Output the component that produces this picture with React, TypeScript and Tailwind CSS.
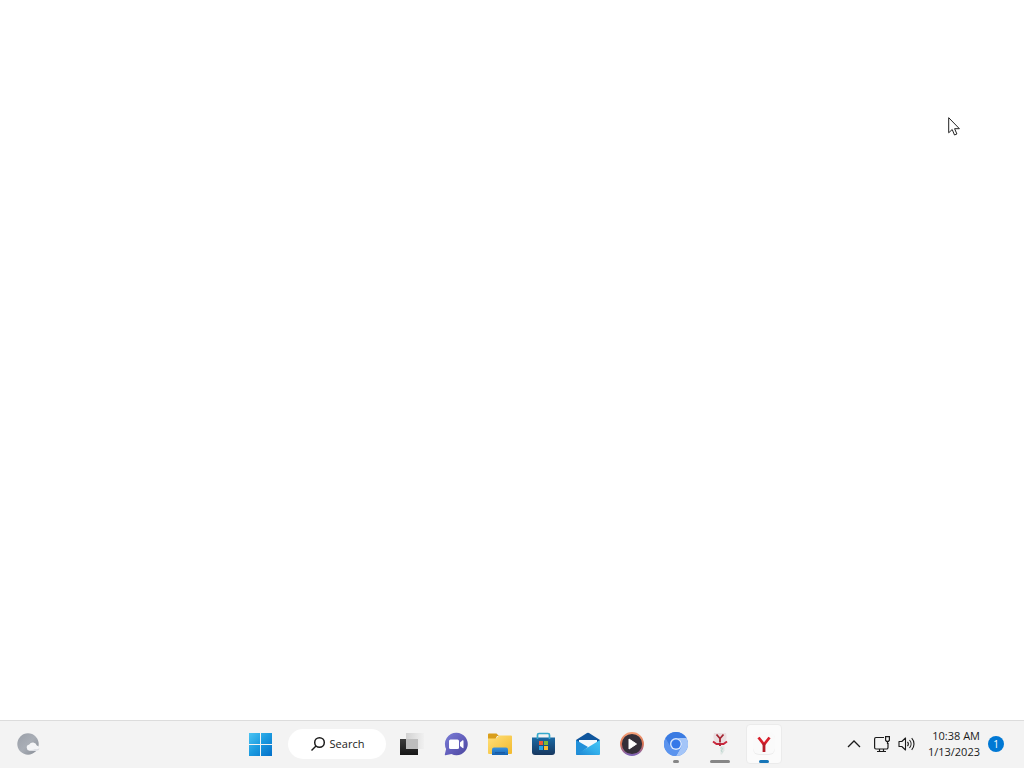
import React from 'react';
import { clsx } from 'clsx';

const WeatherIcon = () => (
  <svg width="24" height="24" viewBox="0 0 24 24" aria-hidden="true">
    <defs>
      <linearGradient id="moon" x1="0" y1="0" x2="1" y2="1">
        <stop offset="0" stopColor="#9a9fa8" />
        <stop offset="0.5" stopColor="#a9aeb6" />
        <stop offset="1" stopColor="#868b94" />
      </linearGradient>
    </defs>
    <circle cx="12" cy="12" r="10.7" fill="url(#moon)" />
    <path d="M13.5 18.8a3.2 3.2 0 0 1-.3-6.3 4.2 4.2 0 0 1 7.6 1 2.7 2.7 0 0 1 .3 5.3z" fill="#f4f5f7" />
    <path d="M14 18.8h7a2.7 2.7 0 0 0 2.5-2.5c-1.5.8-3 1-4.5.8-2 .9-4 1-5.5.6z" fill="#dcdee3" />
  </svg>
);

const StartIcon = () => (
  <svg width="24" height="24" viewBox="0 0 24 24" aria-hidden="true">
    <defs>
      <linearGradient id="win" gradientUnits="userSpaceOnUse" x1="1" y1="1" x2="23" y2="23">
        <stop offset="0" stopColor="#4cc4f2" />
        <stop offset="0.5" stopColor="#1b9be0" />
        <stop offset="1" stopColor="#0573cb" />
      </linearGradient>
    </defs>
    <path d="M1 1h11v11H1zM13 1h11v11H13zM1 13h11v11H1zM13 13h11v11H13z" fill="url(#win)" />
  </svg>
);

const TaskViewIcon = () => (
  <svg width="24" height="24" viewBox="0 0 24 24" aria-hidden="true">
    <defs>
      <linearGradient id="dark" x1="0" y1="0" x2="0" y2="1">
        <stop offset="0" stopColor="#3d3d3d" />
        <stop offset="1" stopColor="#171717" />
      </linearGradient>
      <linearGradient id="light" x1="0" y1="0" x2="1" y2="0">
        <stop offset="0" stopColor="#d2d2d2" />
        <stop offset="1" stopColor="#f0f0f0" />
      </linearGradient>
    </defs>
    <path d="M0 7h18v16H0z" fill="url(#dark)" />
    <path d="M6 1h18v16H6z" fill="url(#light)" />
    <path d="M6 7h12v10H6z" fill="#bdbdbd" />
  </svg>
);

const ChatIcon = () => (
  <svg width="24" height="24" viewBox="0 0 24 24" aria-hidden="true">
    <defs>
      <linearGradient id="chat" x1="0" y1="0" x2="1" y2="1">
        <stop offset="0" stopColor="#7b7fd6" />
        <stop offset="0.5" stopColor="#6460bd" />
        <stop offset="1" stopColor="#4b479e" />
      </linearGradient>
    </defs>
    <path d="M12.5.8a11.2 11.2 0 1 1-5 21.2L1.5 23.2c-.5.1-.8-.3-.7-.8l1.300-5.400A11.200 11.200 0 0 1 12.500.8z" fill="url(#chat)" />
    <rect x="5" y="7.5" width="10" height="9.5" rx="1.5" fill="#fff" />
    <path d="M16 10.500l2.600-2.200c.4-.3.9 0 .9.4v7c0 .5-.5.7-.9.4L16 14z" fill="#fff" />
  </svg>
);

const FolderIcon = () => (
  <svg width="26" height="24" viewBox="0 0 26 24" aria-hidden="true">
    <defs>
      <linearGradient id="folder" x1="0" y1="0" x2="1" y2="1">
        <stop offset="0" stopColor="#ffe07a" />
        <stop offset="1" stopColor="#f2b92d" />
      </linearGradient>
      <linearGradient id="tray" x1="0" y1="0" x2="0" y2="1">
        <stop offset="0" stopColor="#3a93de" />
        <stop offset="1" stopColor="#1464b4" />
      </linearGradient>
    </defs>
    <path d="M1 2.5a1 1 0 0 1 1-1h7.500l2.500 2.500h-2L8 8H1z" fill="#d99e1b" />
    <path d="M1 6.500h8L12 3.500h12a1 1 0 0 1 1 1v16.500a1 1 0 0 1-1 1H2a1 1 0 0 1-1-1z" fill="url(#folder)" />
    <path d="M5 23v-5.500a2 2 0 0 1 2-2h12a2 2 0 0 1 2 2V23z" fill="url(#tray)" />
    <path d="M8 20h10v1.500H8z" fill="#1a5ba3" />
  </svg>
);

const StoreIcon = () => (
  <svg width="24" height="24" viewBox="0 0 24 24" aria-hidden="true">
    <defs>
      <linearGradient id="bag" x1="0" y1="0" x2="0" y2="1">
        <stop offset="0" stopColor="#1a6aa5" />
        <stop offset="1" stopColor="#17375f" />
      </linearGradient>
    </defs>
    <path d="M0 5.500h23V20a3 3 0 0 1-3 3H3a3 3 0 0 1-3-3z" fill="url(#bag)" />
    <path d="M5.500 7V3A1.500 1.500 0 0 1 7 1.500h9A1.500 1.500 0 0 1 17.500 3v4" fill="none" stroke="#35a9cc" strokeWidth="1.700" />
    <path d="M7 9h4v4H7z" fill="#ee5a34" />
    <path d="M12 9h4v4h-4z" fill="#80bb33" />
    <path d="M7 14h4v4H7z" fill="#27a5e6" />
    <path d="M12 14h4v4h-4z" fill="#fcbc2c" />
  </svg>
);

const MailIcon = () => (
  <svg width="24" height="24" viewBox="0 0 24 24" aria-hidden="true">
    <defs>
      <linearGradient id="mail" x1="1" y1="0" x2="0" y2="1">
        <stop offset="0" stopColor="#46c6f5" />
        <stop offset="0.5" stopColor="#32aeea" />
        <stop offset="1" stopColor="#1c83d0" />
      </linearGradient>
    </defs>
    <path d="M0 8l11-7a2 2 0 0 1 2 0l11 7v5H0z" fill="#0f569d" />
    <path d="M3 8h18v7H3z" fill="#f4f8fb" />
    <path d="M0 8l12 7-10 8H1a1 1 0 0 1-1-1z" fill="#2190d9" />
    <path d="M24 8v14a1 1 0 0 1-1 1H1a1 1 0 0 1-.8-.6z" fill="url(#mail)" />
  </svg>
);

const PlayerIcon = () => (
  <svg width="24" height="24" viewBox="0 0 24 24" aria-hidden="true">
    <defs>
      <linearGradient id="ring" x1="0" y1="0" x2="0" y2="1">
        <stop offset="0" stopColor="#f3a07a" />
        <stop offset="0.5" stopColor="#d8704e" />
        <stop offset="1" stopColor="#7c62b5" />
      </linearGradient>
    </defs>
    <circle cx="12" cy="12" r="11" fill="#352f39" stroke="url(#ring)" strokeWidth="1.800" />
    <path d="M9 7l7.500 5L9 17z" fill="#fff" stroke="#fff" strokeLinejoin="round" />
  </svg>
);

const ChromiumIcon = () => (
  <svg width="24" height="24" viewBox="0 0 24 24" aria-hidden="true">
    <circle cx="12" cy="12" r="12" fill="#4a86e8" />
    <path d="M12 6h10.400A12 12 0 0 1 12 24l5.200-9A6 6 0 0 0 12 6z" fill="#a4c5f8" />
    <path d="M1.600 6A12 12 0 0 0 12 24l5.200-9A6 6 0 0 1 6.800 15z" fill="#5b94ee" />
    <path d="M1.600 6A12 12 0 0 1 22.400 6H12a6 6 0 0 0-5.200 9z" fill="#3a7be2" />
    <circle cx="12" cy="12" r="6" fill="#d9e7fc" />
    <circle cx="12" cy="12" r="4.600" fill="#3478e8" />
  </svg>
);

const PunterIcon = () => (
  <svg width="24" height="24" viewBox="0 0 24 24" aria-hidden="true">
    <path d="M6 1h12c.8 3 .8 6-.5 8.500l-5 3.500-5.500-3.500C5 7 5.200 4 6 1z" fill="#eadfe1" />
    <path d="M12.500 13.500l4 1v4l-2.500 4h-1.500z" fill="#dfe7e4" />
    <path d="M8.500 2.500l3.500 4v4M15.500 2.500L12 6.500" fill="none" stroke="#a52531" strokeWidth="1.800" />
    <path d="M5 9.500l3.500 2.500h7L19 9.500" fill="none" stroke="#c8283d" strokeWidth="2" />
    <path d="M12 11v3" stroke="#b3273a" strokeWidth="2" />
    <path d="M12.500 16c2-.5 2.500.5 1.500 1.500s-1 2 .5 2.500" fill="none" stroke="#b6d4cc" />
  </svg>
);

const YandexIcon = () => (
  <svg width="24" height="24" viewBox="0 0 24 24" aria-hidden="true">
    <rect x="1" y="1" width="22" height="22" rx="6" fill="#ececec" />
    <rect x="1" y="0" width="22" height="22" rx="6" fill="#fafafa" />
    <path d="M6.500 5.500l5.500 7 5.500-7" fill="none" stroke="#d8202c" strokeWidth="2.800" />
    <path d="M12 11v9" stroke="#b51d29" strokeWidth="2.800" />
  </svg>
);

const apps = [
  { name: 'Task View', icon: <TaskViewIcon />, bar: '' },
  { name: 'Chat', icon: <ChatIcon />, bar: '' },
  { name: 'File Explorer', icon: <FolderIcon />, bar: '' },
  { name: 'Microsoft Store', icon: <StoreIcon />, bar: '' },
  { name: 'Mail', icon: <MailIcon />, bar: '' },
  { name: 'Media Player', icon: <PlayerIcon />, bar: '' },
  { name: 'Chromium', icon: <ChromiumIcon />, bar: 'w-1.5 bg-[#868686]' },
  { name: 'Yandex Setup', icon: <PunterIcon />, bar: 'w-5 bg-[#868686]' },
  { name: 'Yandex Browser', icon: <YandexIcon />, bar: 'w-2.5 bg-[#1675b8]', active: true },
];

function Tray() {
  return (
    <div className="flex items-center justify-end pr-5 text-[#1b1b1b]">
      <button aria-label="Show hidden icons" className="flex h-10 w-6 items-center justify-center">
        <svg width="14" height="8" viewBox="0 0 14 8" fill="none" stroke="currentColor" strokeWidth="1.300">
          <path d="M1 7l6-6 6 6" />
        </svg>
      </button>
      <button aria-label="Network and volume" className="flex h-10 items-center gap-2 px-2">
        <svg width="16" height="18" viewBox="0 0 16 18" fill="none" stroke="currentColor" strokeWidth="1.200">
          <path d="M10 2.500H2A1.500 1.500 0 0 0 .6 4v8.500A1.500 1.500 0 0 0 2 14h10.500a1.500 1.500 0 0 0 1.500-1.500V8M5.500 14v2.500M9.500 14v2.500M3 16.500h9" />
          <path d="M11.600 1.600h3.800v3.600l-.9 1.200h-2l-.9-1.200zM13.500 6.500V9" />
        </svg>
        <svg width="18" height="16" viewBox="0 0 18 16" fill="none" stroke="currentColor" strokeWidth="1.100">
          <path d="M1 5.500h2.800L7.500 2v12L3.800 10.500H1z" strokeLinejoin="round" />
          <path d="M9.500 5.800a3.500 3.500 0 0 1 0 4.400M11.500 4a6 6 0 0 1 0 8M13.700 2.200a8.500 8.500 0 0 1 0 11.600" />
        </svg>
      </button>
      <button className="flex h-10 items-center gap-2 pl-1 text-right text-[11px] leading-4">
        <span>
          <span className="block">10:38 AM</span>
          <span className="block">1/13/2023</span>
        </span>
        <span className="flex h-4 w-4 items-center justify-center rounded-full bg-[#0078d4] text-[10px] text-white">1</span>
      </button>
    </div>
  );
}

export default function App() {
  return (
    <div className="relative flex min-h-screen flex-col bg-white font-['Open_Sans',sans-serif]">
      <main className="flex-1" />

      <footer className="grid h-12 grid-cols-[1fr_auto_1fr] items-center border-t border-[#dcdcdc] bg-[#f3f3f3] pb-px">
        <div className="pl-4">
          <button aria-label="Widgets" className="flex h-10 items-center">
            <WeatherIcon />
          </button>
        </div>

        <nav className="flex items-center">
          <button aria-label="Start" className="flex h-10 w-11 items-center justify-center">
            <StartIcon />
          </button>
          <div className="pr-1 pl-1.5">
            <button className="flex h-[30px] w-[98px] items-center justify-center gap-1 rounded-full bg-white text-[11px] text-[#1b1b1b]">
              <svg width="16" height="16" viewBox="0 0 16 16" fill="none" stroke="currentColor" strokeWidth="1.500">
                <circle cx="9.500" cy="6.500" r="4.800" />
                <path d="M6 10l-4.500 4.500" />
              </svg>
              Search
            </button>
          </div>
          {apps.map((app) => (
            <div key={app.name} className="flex w-11 justify-center">
              <button
                aria-label={app.name}
                className={clsx(
                  'relative flex h-10 w-9 items-center justify-center rounded border',
                  app.active ? 'border-[#ebebeb] bg-[#fbfbfb]' : 'border-transparent',
                )}
              >
                {app.icon}
                {app.bar && <span className={clsx('absolute bottom-0 h-[3px] rounded-full', app.bar)} />}
              </button>
            </div>
          ))}
        </nav>

        <Tray />
      </footer>

      <svg className="absolute top-[117px] right-16" width="12" height="20" viewBox="0 0 12 20" aria-hidden="true">
        <path d="M.7 .7v15.100l3.500-3.300 2.300 5.500 2.400-1-2.300-5.300h4.800z" fill="#fff" stroke="#222" />
      </svg>
    </div>
  );
}
